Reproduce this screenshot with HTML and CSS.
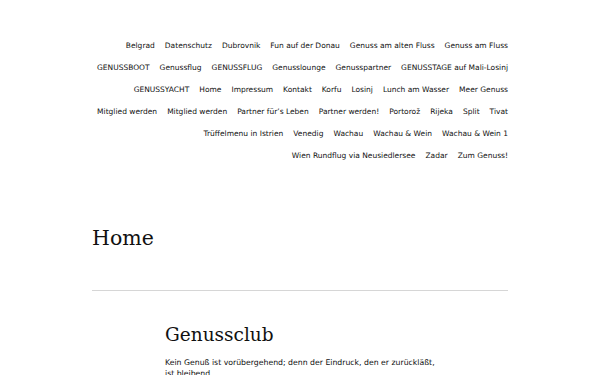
FILE: index.html
```html
<!DOCTYPE html>
<html lang="de">
<head>
<meta charset="utf-8">
<title>Home</title>
<link rel="stylesheet" href="styles.css">
</head>
<body>
<div class="page">
  <header class="site-header">
    <nav class="menu">
      <a href="#">Belgrad</a>
      <a href="#">Datenschutz</a>
      <a href="#">Dubrovnik</a>
      <a href="#">Fun auf der Donau</a>
      <a href="#">Genuss am alten Fluss</a>
      <a href="#">Genuss am Fluss</a>
      <a href="#">GENUSSBOOT</a>
      <a href="#">Genussflug</a>
      <a href="#">GENUSSFLUG</a>
      <a href="#">Genusslounge</a>
      <a href="#">Genusspartner</a>
      <a href="#">GENUSSTAGE auf Mali-Losinj</a>
      <a href="#">GENUSSYACHT</a>
      <a href="#">Home</a>
      <a href="#">Impressum</a>
      <a href="#">Kontakt</a>
      <a href="#">Korfu</a>
      <a href="#">Losinj</a>
      <a href="#">Lunch am Wasser</a>
      <a href="#">Meer Genuss</a>
      <a href="#">Mitglied werden</a>
      <a href="#">Mitglied werden</a>
      <a href="#">Partner für’s Leben</a>
      <a href="#">Partner werden!</a>
      <a href="#">Portorož</a>
      <a href="#">Rijeka</a>
      <a href="#">Split</a>
      <a href="#">Tivat</a>
      <a href="#">Trüffelmenu in Istrien</a>
      <a href="#">Venedig</a>
      <a href="#">Wachau</a>
      <a href="#">Wachau &amp; Wein</a>
      <a href="#">Wachau &amp; Wein 1</a>
      <a href="#">Wien Rundflug via Neusiedlersee</a>
      <a href="#">Zadar</a>
      <a href="#">Zum Genuss!</a>
    </nav>
  </header>
  <main class="content">
    <h1 class="page-title">Home</h1>
    <hr class="divider">
    <section class="entry">
      <h2 class="entry-title">Genussclub</h2>
      <p class="entry-text">Kein Genuß ist vorübergehend; denn der Eindruck, den er zurückläßt, ist bleibend.</p>
    </section>
  </main>
</div>
</body>
</html>
```

FILE: styles.css
```css
html, body {
  margin: 0;
  padding: 0;
  background: #ffffff;
  color: #111111;
}

.page {
  width: 416px;
  margin: 0 auto;
}

.site-header {
  padding-top: 35px;
}

.menu {
  display: flex;
  flex-wrap: wrap;
  justify-content: flex-end;
  column-gap: 10px;
  font-family: "DejaVu Sans", sans-serif;
  font-size: 7.5px;
  line-height: 22px;
}

.menu a {
  color: #111111;
  text-decoration: none;
}

.page-title {
  font-family: "DejaVu Serif", serif;
  font-weight: normal;
  font-size: 20.5px;
  line-height: 24px;
  margin: 59px 0 0 0;
}

.divider {
  border: 0;
  border-top: 1px solid #d6d6d6;
  margin: 40px 0 0 0;
}

.entry {
  width: 270px;
  margin: 0 auto;
}

.entry-title {
  font-family: "DejaVu Serif", serif;
  font-weight: normal;
  font-size: 18.5px;
  line-height: 22px;
  margin: 33px 0 0 0;
}

.entry-text {
  font-family: "DejaVu Sans", sans-serif;
  font-size: 7.75px;
  line-height: 11px;
  margin: 11px 0 0 0;
}
```
